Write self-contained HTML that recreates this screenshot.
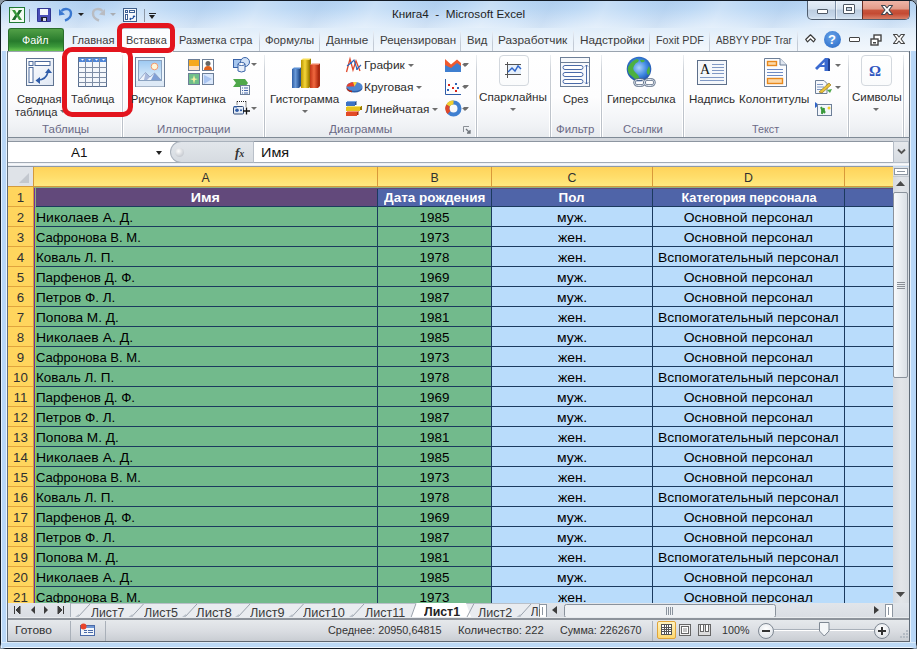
<!DOCTYPE html>
<html><head><meta charset="utf-8">
<style>
*{box-sizing:border-box;margin:0;padding:0}
html,body{width:917px;height:649px;overflow:hidden;background:#8a96a3}
body{position:relative;font-family:"Liberation Sans",sans-serif;}
.a{position:absolute}
svg{position:absolute;overflow:visible}
#win{position:absolute;left:0;top:0;width:917px;height:649px;border:1px solid #121a24;border-radius:7px 7px 6px 6px;
 background:linear-gradient(180deg,#dce8f6 0px,#d3e2f3 20px,#e2ecf8 30px,#edf3fa 50px,#c6daf0 60px,#c2d7ef 649px);}
.tx{position:absolute;white-space:nowrap;font-size:11.3px;color:#2a2a2a;line-height:1}
.tab{position:absolute;top:35px;font-size:11.3px;color:#3b3b3b;white-space:nowrap;line-height:1}
.tsep{position:absolute;top:31px;width:1px;height:20px;background:linear-gradient(#e9eff7,#c3cbd6 60%,#c3cbd6)}
#ribbon{position:absolute;left:7px;top:51px;width:903px;height:87px;border:1px solid #5f6b78;border-top-color:#9aa4af;border-bottom-color:#7f8a96;border-radius:2px 2px 0 0;
 background:linear-gradient(180deg,#ffffff 0px,#fdfdfe 45px,#f1f3f6 72px,#e7eaee 86px)}
.gsep{position:absolute;top:3px;width:1px;height:82px;background:linear-gradient(#eceff2,#c9ced5 20%,#b9bfc7 95%);box-shadow:-1px 0 0 #fff,1px 0 0 #fff}
.glbl{position:absolute;top:72px;font-size:11.3px;color:#6b6b86;white-space:nowrap;line-height:1}
.rl{position:absolute;font-size:11.3px;color:#2e2e2e;white-space:nowrap;line-height:1}
.dd{position:absolute;width:0;height:0;border-left:3px solid transparent;border-right:3px solid transparent;border-top:3px solid #6d6d6d}
#grid{position:absolute;left:8px;top:166px;width:885px;height:437px;background:#fff;overflow:hidden;border-top:1px solid #8f99a6}
.corner{position:absolute;left:0;top:0;width:26px;height:20px;background:#dfe3e8;border-right:1px solid #d39a3c;border-bottom:1px solid #d39a3c}
.ch{position:absolute;top:0;height:20px;background:linear-gradient(180deg,#ffd35a 0%,#ffdd6a 50%,#ffe980 100%);border-right:1px solid #d9993a;border-bottom:1px solid #d39a3c;
 font-size:12.3px;color:#303030;text-align:center;line-height:23px}
.rh{position:absolute;left:0;width:26px;height:20px;background:#ffd55d;border-bottom:1px solid #e0a43e;border-right:1px solid #d39a3c;
 font-size:13.3px;color:#303030;text-align:center;line-height:22px}
.c{position:absolute;height:20px;white-space:nowrap;overflow:hidden;font-size:13px;line-height:22px;color:#000;border-bottom:1px solid #1b3a5e;border-right:1px solid #1b3a5e}
.hA{background:#62497b;color:#fff;font-weight:bold;font-size:13px;text-align:center}
.hB{background:#4f64a8;color:#fff;font-weight:bold;font-size:13px;text-align:center}
.gA{background:#72ba8c;padding-left:2px}
.gB{background:#72ba8c;text-align:center;font-size:13.4px}
.bC{background:#b9dcfb;text-align:center}
.sh{position:absolute;top:606px;font-size:12.3px;color:#3a3a3a;white-space:nowrap;line-height:1}
.st{position:absolute;top:626px;font-size:11px;color:#333;white-space:nowrap;line-height:1}

.t{position:absolute;white-space:nowrap;line-height:1;transform-origin:0 0}

.c span{display:inline-block;transform:scaleX(1.07);transform-origin:50% 50%}
.gA span{transform-origin:0 50%}
.gB span{transform:scaleX(1.0)}
.hA span,.hB span{transform:scaleX(1.0)}

</style></head><body>

<div id="win"></div>
<!-- window corner background -->
<div class="a" style="left:1px;top:1px;width:915px;height:27px;border-radius:6px 6px 0 0;background:linear-gradient(180deg,#b6d4f3 0px,#bdd9f5 8px,#cfe3f8 18px,#e0edfa 28px);"></div>
<div class="a" style="left:1px;top:1px;width:915px;height:27px;border-radius:6px 6px 0 0;background:repeating-linear-gradient(115deg,rgba(255,255,255,0) 0px,rgba(255,255,255,0.22) 25px,rgba(255,255,255,0) 55px,rgba(110,150,200,0.10) 80px,rgba(255,255,255,0) 105px);"></div>
<div class="a" style="left:1px;top:28px;width:915px;height:23px;background:linear-gradient(180deg,#e0edfa 0px,#ebf3fb 12px,#f2f7fc 23px)"></div>
<!-- left/right frame -->
<div class="a" style="left:1px;top:51px;width:1px;height:597px;background:#e6f2fe"></div>
<div class="a" style="left:2px;top:51px;width:4px;height:597px;background:#b9d7f7"></div>
<div class="a" style="left:6px;top:51px;width:1px;height:597px;background:#e8f4ff"></div>
<div class="a" style="left:7px;top:51px;width:1px;height:591px;background:#5f6b78"></div>
<div class="a" style="left:909px;top:51px;width:1px;height:591px;background:#5f6b78"></div>
<div class="a" style="left:910px;top:51px;width:1px;height:597px;background:#e6f2fe"></div>
<div class="a" style="left:911px;top:51px;width:5px;height:597px;background:#b9d7f7"></div>
<div class="a" style="left:1px;top:642px;width:915px;height:6px;border-radius:0 0 5px 5px;background:linear-gradient(#dcebf9 0px,#dcebf9 1px,#bcd9f6 1px,#bcd9f6 5px,#f0f7ff 5px)"></div>


<!-- QAT -->
<svg style="left:9px;top:7px" width="16" height="16" viewBox="0 0 16 16">
 <rect x="0.5" y="0.5" width="15" height="15" fill="#f4fbf2" stroke="#217a35"/>
 <path d="M1 1 L5 1 L1 5Z" fill="#d8ecd5"/>
 <path d="M3 3 L6 3 L8 6.5 L10 3 L13 3 L9.8 8 L13 13 L10 13 L8 9.5 L6 13 L3 13 L6.2 8Z" fill="#3a9a3c"/>
 <path d="M3 13 L6.2 8 L8 9.5 L6 13Z" fill="#1e6b2e"/>
 <path d="M10 3 L13 3 L9.8 8 L8 6.5Z" fill="#1e6b2e"/>
</svg>
<div class="a" style="left:29px;top:9px;width:1px;height:13px;background:#8c98a6"></div>
<svg style="left:37px;top:8px" width="14" height="14" viewBox="0 0 14 14">
 <rect x="0" y="0" width="14" height="14" rx="1" fill="#4a4fb8"/>
 <rect x="0.5" y="0.5" width="13" height="13" rx="1" fill="none" stroke="#2f3590"/>
 <rect x="3" y="1" width="8" height="6" fill="#f4f6fa"/>
 <rect x="4" y="9" width="6" height="4" fill="#1e2030"/>
 <rect x="6" y="10" width="3" height="3" fill="#d8dce6"/>
</svg>
<svg style="left:59px;top:8px" width="14" height="13" viewBox="0 0 14 13">
 <path d="M2.5 3 C5 0 12 0 12 5.5 C12 9 9 11.5 6 12.5" fill="none" stroke="#3a78d0" stroke-width="2.4"/>
 <path d="M0 1 L0 7.5 L6 6.5Z" fill="#3a78d0"/>
</svg>
<div class="dd" style="left:78px;top:13px;border-width:3px 3px 0 3px;border-top-color:#222"></div>
<svg style="left:91px;top:8px" width="14" height="13" viewBox="0 0 14 13">
 <path d="M11.5 3 C9 0 2 0 2 5.5 C2 9 5 11.5 8 12.5" fill="none" stroke="#b9bcc2" stroke-width="2.4"/>
 <path d="M14 1 L14 7.5 L8 6.5Z" fill="#b9bcc2"/>
</svg>
<div class="dd" style="left:110px;top:13px;border-width:3px 3px 0 3px;border-top-color:#a9adb3"></div>
<svg style="left:123px;top:8px" width="14" height="14" viewBox="0 0 14 14">
 <rect x="0.5" y="0.5" width="13" height="13" fill="#f4f7fb" stroke="#3f5f8a"/>
 <rect x="2.5" y="2.5" width="2" height="2" fill="#fff" stroke="#3d5f95" stroke-width="1"/>
 <rect x="6.5" y="2.5" width="5" height="2" fill="#fff" stroke="#3d5f95" stroke-width="1"/>
 <rect x="2.5" y="6.5" width="2" height="5" fill="#fff" stroke="#3d5f95" stroke-width="1"/>
 <path d="M7 11 Q10.5 11 11 8" fill="none" stroke="#1f4fa0" stroke-width="1.2"/>
 <path d="M6 11 L8 9.5 L8 12.5Z M11 7 L9.5 9 L12.5 9Z" fill="#1f4fa0"/>
</svg>
<div class="a" style="left:144px;top:9px;width:1px;height:13px;background:#8c98a6"></div>
<div class="a" style="left:149px;top:13px;width:7px;height:1px;background:#222"></div>
<div class="dd" style="left:149px;top:15px;border-width:4px 3.5px 0 3.5px;border-top-color:#222"></div>

<!-- window buttons -->
<div class="a" style="left:807px;top:1px;width:103px;height:19px;border:1px solid #4f5d6e;border-top:none;border-radius:0 0 5px 5px;overflow:hidden;background:linear-gradient(180deg,#e6eef8 0%,#d5e1ee 45%,#bccde0 50%,#c8d8ea 85%,#dbe7f3 100%)">
  <div class="a" style="left:27px;top:0;width:1px;height:19px;background:#7d8fa6;box-shadow:1px 0 0 rgba(255,255,255,.6)"></div>
  <div class="a" style="left:54px;top:0;width:48px;height:18px;border-left:1px solid #6a2f26;background:linear-gradient(180deg,#efb6a8 0%,#e29a88 45%,#c9553d 50%,#c44a33 70%,#d97e66 100%)"></div>
</div>
<div class="a" style="left:817px;top:9px;width:11px;height:5px;background:#fff;border:1px solid #4f5966;border-radius:1px"></div>
<div class="a" style="left:843px;top:4px;width:12px;height:10px;background:#fff;border:1px solid #4f5966;border-radius:1px"></div>
<div class="a" style="left:846px;top:7px;width:6px;height:4px;background:#c5d3e3;border:1px solid #4f5966"></div>
<svg style="left:881px;top:5px" width="12" height="11" viewBox="0 0 12 11">
 <path d="M0.5 0.5 H4 L6 3 L8 0.5 H11.5 L8 5 L11.5 9.5 H8 L6 7 L4 9.5 H0.5 L4 5Z" fill="#fff" stroke="#3f4650" stroke-width="1.1" stroke-linejoin="round"/>
</svg>

<!-- tabs row -->
<div class="a" style="left:8px;top:28px;width:56px;height:23px;border-radius:3px 3px 0 0;background:linear-gradient(180deg,#52a047 0%,#2f8131 45%,#267a2c 55%,#3b983a 80%,#68c650 100%);border:1px solid #2a6e2c;border-bottom:none"></div>
<div class="a" style="left:119px;top:28px;width:55px;height:24px;background:linear-gradient(#fbfcfe,#fff);border:1px solid #b9c0c9;border-bottom:none;border-radius:3px 3px 0 0"></div>
<div class="tsep" style="left:259px"></div>
<div class="tsep" style="left:319px"></div>
<div class="tsep" style="left:373px"></div>
<div class="tsep" style="left:460px"></div>
<div class="tsep" style="left:492px"></div>
<div class="tsep" style="left:573px"></div>
<div class="tsep" style="left:649px"></div>
<div class="tsep" style="left:709px"></div>
<div class="tsep" style="left:797px"></div>
<!-- ribbon right icons -->
<svg style="left:805px;top:34px" width="11" height="9" viewBox="0 0 11 9">
 <path d="M0.7 5.5 L5.5 0.8 L10.3 5.5 L8.5 7.8 L5.5 4.8 L2.5 7.8Z" fill="#fff" stroke="#3a3a3a" stroke-width="1.2" stroke-linejoin="round"/>
</svg>
<div class="a" style="left:824px;top:31px;width:17px;height:17px;border-radius:50%;background:radial-gradient(circle at 45% 35%,#6aa3e8 0%,#3f7fd4 60%,#2c62b8 100%)"></div>
<div class="tx" style="left:828px;top:33px;font-size:13px;font-weight:bold;color:#fff">?</div>
<div class="a" style="left:849px;top:37px;width:11px;height:5px;background:#fff;border:1.5px solid #444;border-radius:1px"></div>
<svg style="left:870px;top:34px" width="12" height="12" viewBox="0 0 12 12">
 <rect x="4" y="1" width="7" height="6" fill="#fff" stroke="#444" stroke-width="1.4"/>
 <rect x="1" y="5" width="7" height="6" fill="#fff" stroke="#444" stroke-width="1.4"/>
 <rect x="3" y="8" width="3" height="1.5" fill="#444"/>
</svg>
<svg style="left:893px;top:34px" width="12" height="11" viewBox="0 0 12 11">
 <path d="M0.5 0.5 H4 L6 3 L8 0.5 H11.5 L8 5 L11.5 9.5 H8 L6 7 L4 9.5 H0.5 L4 5Z" fill="#fff" stroke="#444" stroke-width="1.1" stroke-linejoin="round"/>
</svg>

<!-- ribbon -->
<div id="ribbon">
  <div class="gsep" style="left:114px"></div>
  <div class="gsep" style="left:256px"></div>
  <div class="gsep" style="left:468px"></div>
  <div class="gsep" style="left:542px"></div>
  <div class="gsep" style="left:593px"></div>
  <div class="gsep" style="left:675px"></div>
  <div class="gsep" style="left:840px"></div>
  <div class="gsep" style="left:895px"></div>
            </div>
<div class="a" style="left:120px;top:51px;width:53px;height:1px;background:#fff"></div>

<div class="dd" style="left:302px;top:110px"></div>
<div class="dd" style="left:408px;top:64px"></div>
<div class="dd" style="left:416px;top:86px"></div>
<div class="dd" style="left:432px;top:108px"></div>
<div class="dd" style="left:462px;top:64px"></div>
<div class="dd" style="left:462px;top:86px"></div>
<div class="dd" style="left:462px;top:108px"></div>
<div class="dd" style="left:510px;top:108px"></div>
<div class="dd" style="left:835px;top:64px"></div>
<div class="dd" style="left:835px;top:86px"></div>
<svg style="left:463px;top:126px" width="8" height="8" viewBox="0 0 8 8"><path d="M0.5 6 V0.5 H6" fill="none" stroke="#8a8f96"/><path d="M3 3 L7 7 M7 4 V7 H4" fill="none" stroke="#6f747b" stroke-width="1.3"/></svg>
<div class="dd" style="left:873px;top:108px"></div>

<!-- formula bar -->
<div class="a" style="left:8px;top:138px;width:901px;height:28px;background:#d3d7dd"></div>
<div class="a" style="left:8px;top:141px;width:885px;height:22px;background:#fff;border-top:1px solid #8d96a1;border-bottom:1px solid #a3abb5"></div>
<div class="a" style="left:8px;top:163px;width:901px;height:3px;background:linear-gradient(#e9edf2,#f8f9fb 50%,#dfe4ea)"></div>
<div class="dd" style="left:156px;top:151px;border-width:4px 3.5px 0 3.5px;border-top-color:#222"></div>
<div class="a" style="left:170px;top:141px;width:84px;height:22px;background:linear-gradient(#e2e6eb,#d6dbe1);border:1px solid #a9b1bb;border-right:1px solid #b9c0c9;border-radius:11px 0 0 11px"></div>
<div class="a" style="left:175px;top:148px;width:9px;height:9px;border-radius:50%;background:radial-gradient(circle at 40% 35%,#fdfdfd,#c8ccd2 70%)"></div>
<div class="tx" style="left:235px;top:146px;font-family:'Liberation Serif',serif;font-style:italic;font-weight:bold;font-size:13px;color:#333">f<span style="font-size:10px">x</span></div>
<div class="a" style="left:893px;top:141px;width:16px;height:22px;background:linear-gradient(#e6e9ed,#d6dbe1);border:1px solid #b4bcc6"></div>
<svg style="left:897px;top:148px" width="9" height="7" viewBox="0 0 9 7"><path d="M1 1.5 L4.5 5 L8 1.5" fill="none" stroke="#555" stroke-width="1.8"/></svg>

<!-- Pivot table 26,58 -->
<svg style="left:25px;top:57px" width="30" height="30" viewBox="0 0 30 30">
 <rect x="1.5" y="1.5" width="27" height="27" fill="url(#gp)" stroke="#5f7391"/>
 <rect x="4" y="4.5" width="4" height="4" fill="#fff" stroke="#4d6a9c"/>
 <rect x="10" y="4.5" width="15" height="4" fill="#fff" stroke="#4d6a9c"/>
 <rect x="4" y="10.5" width="4" height="15" fill="#fff" stroke="#4d6a9c"/>
 <path d="M13 23 Q21 23 23 15" fill="none" stroke="#2f5ca8" stroke-width="1.6"/>
 <path d="M10.5 23.5 L15 20 L15 27Z" fill="#2f5ca8"/>
 <path d="M23.5 11.5 L20 16 L27 16Z" fill="#2f5ca8"/>
</svg>
<svg width="0" height="0" style="left:0;top:0"><defs>
 <linearGradient id="gp" x1="0" y1="0" x2="1" y2="1"><stop offset="0" stop-color="#ffffff"/><stop offset="1" stop-color="#dfe7f3"/></linearGradient>
 <linearGradient id="gsky" x1="0" y1="0" x2="0" y2="1"><stop offset="0" stop-color="#9dc9f2"/><stop offset="1" stop-color="#e4f1fc"/></linearGradient>
 <linearGradient id="gblue" x1="0" y1="0" x2="1" y2="0"><stop offset="0" stop-color="#2f5fa6"/><stop offset="0.5" stop-color="#6a9ad8"/><stop offset="1" stop-color="#2c5a9c"/></linearGradient>
 <linearGradient id="gyel" x1="0" y1="0" x2="1" y2="0"><stop offset="0" stop-color="#b99500"/><stop offset="0.5" stop-color="#f5d63a"/><stop offset="1" stop-color="#a98700"/></linearGradient>
 <linearGradient id="gred" x1="0" y1="0" x2="1" y2="0"><stop offset="0" stop-color="#c23516"/><stop offset="0.5" stop-color="#f0683f"/><stop offset="1" stop-color="#b52e12"/></linearGradient>
 <radialGradient id="gglobe" cx="0.5" cy="0.45" r="0.55"><stop offset="0" stop-color="#a9d2fa"/><stop offset="0.6" stop-color="#3d86e0"/><stop offset="1" stop-color="#1d4fa6"/></radialGradient>
</defs></svg>
<!-- Table icon 78,57 -->
<svg style="left:78px;top:57px" width="30" height="30" viewBox="0 0 30 30">
 <rect x="0.5" y="0.5" width="28" height="29" fill="#f4f7fb" stroke="#5a6f8f"/>
 <rect x="1" y="1" width="27" height="4" fill="#4f86d8"/>
 <path d="M3 2 L6 2 L4.5 3.8Z M10 2 L13 2 L11.5 3.8Z M17 2 L20 2 L18.5 3.8Z M24 2 L27 2 L25.5 3.8Z" fill="#fff"/>
 <path d="M0.5 10.5 H28.5 M0.5 15.5 H28.5 M0.5 20.5 H28.5 M0.5 25.5 H28.5 M7.5 1 V29.5 M14.5 1 V29.5 M21.5 1 V29.5" stroke="#7f8ea6" stroke-width="1"/>
</svg>
<!-- Picture 135,57 -->
<svg style="left:135px;top:57px" width="30" height="30" viewBox="0 0 30 30">
 <rect x="0.5" y="0.5" width="29" height="29" fill="#eef6fd" stroke="#6d7f98"/>
 <rect x="1" y="24" width="28" height="5.5" fill="#dde9f6"/>
 <rect x="3.5" y="3.5" width="23" height="20" fill="url(#gsky)" stroke="#8aa2c0"/>
 <circle cx="19.5" cy="9.5" r="3.3" fill="#fff6d8" stroke="#f29a72" stroke-width="1"/>
 <path d="M4 23 L10.5 15.5 L15 20 L19.5 16 L26 23Z" fill="#eef3fb"/>
 <path d="M10.5 15.5 L15 20 L12 23 L9 23Z" fill="#a9b9dc"/>
 <path d="M19.5 16 L26 23 L16 23Z" fill="#7f9fd6"/>
 <path d="M4 23 L10.5 15.5 L15 20 L19.5 16 L26 23" fill="none" stroke="#8797bd" stroke-width="0.8"/>
</svg>
<!-- Clip art 188,59 -->
<svg style="left:188px;top:59px" width="27" height="27" viewBox="0 0 27 27">
 <rect x="0.5" y="0.5" width="11" height="11" fill="#f6a81c" stroke="#6d7f98"/>
 <rect x="1" y="7" width="10" height="4" fill="#ffe0c0"/>
 <rect x="14.5" y="0.5" width="11" height="11" fill="#fff" stroke="#6d7f98"/>
 <circle cx="20" cy="4.5" r="2.5" fill="#666"/>
 <path d="M16 11 Q16 7 20 7 Q24 7 24 11Z" fill="#e0621e"/>
 <rect x="0.5" y="14.5" width="11" height="11" fill="#6fbf8a" stroke="#6d7f98"/>
 <path d="M6 16 L7 19.5 L10 20 L7 21 L6 25 L5 21 L2 20 L5 19.5Z" fill="#f7f3a0"/>
 <rect x="14.5" y="14.5" width="11" height="11" fill="#dbe8fb" stroke="#6d7f98"/>
 <path d="M16 16 L24 20 L16 25Z" fill="#a9c4f0"/>
</svg>
<!-- Shapes 233,57 -->
<svg style="left:233px;top:57px" width="17" height="16" viewBox="0 0 17 16">
 <rect x="0.5" y="2.5" width="8" height="8" fill="#a6c6ee" stroke="#3b64a8"/>
 <circle cx="12" cy="5" r="4.5" fill="#cfe0f6" stroke="#3b64a8"/>
 <path d="M5 7 V14 Q8.5 16 12 14 V7" fill="#e9f0fa" stroke="#3b64a8"/>
 <ellipse cx="8.5" cy="7" rx="3.5" ry="1.5" fill="#fff" stroke="#3b64a8"/>
</svg>
<div class="dd" style="left:251px;top:63px"></div>
<!-- SmartArt 233,79 -->
<svg style="left:233px;top:79px" width="17" height="16" viewBox="0 0 17 16">
 <path d="M0 0 H12 L15 4 L12 8 H0 L3 4Z" fill="#4fa84a"/>
 <rect x="7.5" y="6.5" width="9" height="9" fill="#f2f6fb" stroke="#6d7f98"/>
 <path d="M9 9 H10 M11 9 H15 M9 11.5 H10 M11 11.5 H15 M9 14 H10 M11 14 H15" stroke="#4466a8" stroke-width="1"/>
</svg>
<!-- Screenshot 233,101 -->
<svg style="left:233px;top:101px" width="17" height="14" viewBox="0 0 17 14">
 <path d="M4 0.5 H13 M13 0.5 V6" fill="none" stroke="#222" stroke-width="1" stroke-dasharray="1 1"/>
 <path d="M4 0.5 V4" fill="none" stroke="#222" stroke-width="1" stroke-dasharray="1 1"/>
 <rect x="0.5" y="5.5" width="10" height="7.5" rx="1" fill="#e3ebf5" stroke="#2f4a78"/>
 <rect x="1" y="5" width="3" height="1.5" fill="#2f5ca8"/>
 <circle cx="4" cy="9.3" r="1.8" fill="#2f5ca8"/>
 <rect x="7" y="8.5" width="2" height="1.6" fill="#2f5ca8"/>
 <path d="M13.5 6.5 V13.5 M10 10 H17" stroke="#111" stroke-width="1.3"/>
</svg>
<div class="dd" style="left:251px;top:107px"></div>
<!-- Histogram 291,58 -->
<svg style="left:291px;top:58px" width="30" height="30" viewBox="0 0 30 30">
 <path d="M1 11 L3 9.5 L10 9.5 L8 11Z" fill="#5b8fd4"/>
 <path d="M8 11 L10 9.5 V28 L8 30Z" fill="#28508a"/>
 <rect x="1" y="11" width="7" height="19" fill="url(#gblue)"/>
 <path d="M10 2 L12 0.5 L20 0.5 L18 2Z" fill="#f7dd56"/>
 <path d="M18 2 L20 0.5 V28 L18 30Z" fill="#9a7c00"/>
 <rect x="10" y="2" width="8" height="28" fill="url(#gyel)"/>
 <path d="M19 7 L21 5.5 L29 5.5 L27 7Z" fill="#f08060"/>
 <path d="M27 7 L29 5.5 V28 L27 30Z" fill="#a82a10"/>
 <rect x="19" y="7" width="8" height="23" fill="url(#gred)"/>
</svg>
<!-- Line chart 346,58 -->
<svg style="left:346px;top:58px" width="16" height="15" viewBox="0 0 16 15">
 <path d="M0.5 14 L4 1 L7 12 L10 3 L14 13" fill="none" stroke="#e0482a" stroke-width="1.3"/>
 <path d="M1 8 L5 5 L8 2 L11 11 L15 7" fill="none" stroke="#2f64b8" stroke-width="1.1"/>
 <circle cx="5" cy="5" r="1" fill="#2f64b8"/><circle cx="11" cy="11" r="1" fill="#2f64b8"/>
</svg>
<!-- Pie 346,81 -->
<svg style="left:346px;top:81px" width="17" height="12" viewBox="0 0 17 12">
 <ellipse cx="8.5" cy="7" rx="8" ry="4.5" fill="#2d5ea6"/>
 <ellipse cx="8.5" cy="5.5" rx="8" ry="4.5" fill="#4f86d0"/>
 <path d="M8.5 5.5 L0.5 5.5 A8 4.5 0 0 1 8 1 Z" fill="#e8402a"/>
 <path d="M8.5 5.5 L7 1 A8 4.5 0 0 1 11 1.2 Z" fill="#f6d33a"/>
 <path d="M0.5 5.5 A8 4.5 0 0 0 6 9.8 L6 11.3 A8 4.5 0 0 1 0.5 7Z" fill="#b82a14"/>
</svg>
<!-- Bar 346,101 -->
<svg style="left:346px;top:101px" width="17" height="16" viewBox="0 0 17 16">
 <rect x="0" y="1" width="9" height="4" fill="#3d72c4"/><rect x="9" y="0" width="1.5" height="4" fill="#28508a"/><rect x="1" y="0" width="9" height="1" fill="#7aa6e4"/>
 <rect x="0" y="6" width="14" height="4" fill="#e7c21d"/><rect x="14" y="5" width="2" height="4" fill="#9a7c00"/><rect x="1" y="5" width="14" height="1" fill="#f7e26a"/>
 <rect x="0" y="11" width="11" height="4" fill="#e24a26"/><rect x="11" y="10" width="1.5" height="4" fill="#a82a10"/><rect x="1" y="10" width="11" height="1" fill="#f59070"/>
</svg>
<!-- Area 445,59 -->
<svg style="left:445px;top:59px" width="16" height="13" viewBox="0 0 16 13">
 <path d="M0 0 L6 5.5 L12 0.5 L16 4 V13 H0Z" fill="#f05a2e"/>
 <path d="M0 6 L6 9 L12 4 L16 7 V13 H0Z" fill="#3f7fd0"/>
</svg>
<div class="dd" style="left:463px;top:63px"></div>
<!-- Scatter 445,79 -->
<svg style="left:445px;top:79px" width="16" height="16" viewBox="0 0 16 16">
 <path d="M0.5 0 V15.5 H16" fill="none" stroke="#2f5ca8" stroke-width="1"/>
 <rect x="3" y="5" width="2" height="2" fill="#d8261a"/><rect x="10" y="4" width="2" height="2" fill="#2f64b8"/>
 <rect x="7" y="8" width="2" height="2" fill="#d8261a"/><rect x="12" y="8" width="2" height="2" fill="#2f64b8"/>
 <rect x="2" y="10" width="2" height="2" fill="#2f64b8"/><rect x="10" y="11" width="2" height="2" fill="#d8261a"/>
</svg>
<div class="dd" style="left:463px;top:85px"></div>
<!-- Doughnut 445,100 -->
<svg style="left:445px;top:100px" width="17" height="17" viewBox="0 0 17 17">
 <circle cx="8.5" cy="8.5" r="6" fill="none" stroke="#3f7fd0" stroke-width="4"/>
 <path d="M8.5 2.5 A6 6 0 0 0 3 5.5" fill="none" stroke="#f2cf2e" stroke-width="4"/>
 <path d="M3 5.5 A6 6 0 0 0 4 12.5" fill="none" stroke="#e0482a" stroke-width="4"/>
</svg>
<div class="dd" style="left:463px;top:107px"></div>
<!-- Sparklines 499,55 -->
<div class="a" style="left:499px;top:55px;width:30px;height:31px;border:1px solid #d3d8de;border-radius:4px;background:linear-gradient(#fff,#fafbfc)"></div>
<svg style="left:505px;top:62px" width="18" height="16" viewBox="0 0 18 16">
 <path d="M2.5 0 V16 M0 2.5 H16 M0 12.5 H16" stroke="#555" stroke-width="1"/>
 <rect x="3" y="3" width="13" height="9" fill="#e6f0fb"/>
 <path d="M3 10 L7 6 L10 9 L13 4 L16 7" fill="none" stroke="#2f64c8" stroke-width="1.4"/>
</svg>
<!-- Slicer 560,57 -->
<svg style="left:560px;top:57px" width="30" height="30" viewBox="0 0 30 30">
 <rect x="0.5" y="0.5" width="29" height="29" fill="#f7f9fc" stroke="#6d7f98"/>
 <path d="M0.5 5.5 H29.5" stroke="#6d7f98"/>
 <rect x="3" y="8.5" width="20" height="4" rx="2" fill="#fff" stroke="#4a6aa8"/>
 <rect x="3" y="15.5" width="20" height="4" rx="2" fill="#fff" stroke="#4a6aa8"/>
 <rect x="3" y="22.5" width="20" height="4" rx="2" fill="#fff" stroke="#4a6aa8"/>
 <path d="M26.5 8 V27 M25 9.5 L26.5 8 L28 9.5 M25 25.5 L26.5 27 L28 25.5" fill="none" stroke="#4a6aa8"/>
</svg>
<!-- Globe 626,57 -->
<svg style="left:626px;top:57px" width="30" height="30" viewBox="0 0 30 30">
 <circle cx="13" cy="12" r="12.3" fill="url(#gglobe)"/>
 <path d="M2 10 Q5 4 11 2 Q14 3 12 5 Q9 6 8 9 Q6 12 9 15 Q13 18 14 22 Q12 24 9 22 Q6 19 3 17 Q1 13 2 10Z" fill="#4cb040"/>
 <path d="M23 9 Q25 13 23 18 Q20 17 21 13Z" fill="#4cb040"/>
 <path d="M14 3 Q18 2 19 4 Q17 6 15 5Z" fill="#4cb040"/>
 <rect x="8.5" y="22.5" width="10" height="6" rx="3" fill="none" stroke="#5b6c84" stroke-width="2.4"/>
 <rect x="18.5" y="22.5" width="10" height="6" rx="3" fill="none" stroke="#5b6c84" stroke-width="2.4"/>
 <rect x="8.5" y="22.5" width="10" height="6" rx="3" fill="none" stroke="#dfe6f0" stroke-width="1"/>
 <rect x="18.5" y="22.5" width="10" height="6" rx="3" fill="none" stroke="#dfe6f0" stroke-width="1"/>
</svg>
<!-- TextBox 697,60 -->
<svg style="left:697px;top:60px" width="30" height="25" viewBox="0 0 30 25">
 <rect x="0.5" y="0.5" width="29" height="24" fill="#f4f7fb" stroke="#5d6f8a"/>
 <text x="3" y="14" font-family="Liberation Serif" font-size="14" fill="#111">A</text>
 <path d="M15 4.5 H27 M15 7.5 H27 M15 10.5 H27 M15 13.5 H27 M3 17.5 H27 M3 20.5 H27" stroke="#7f98c4" stroke-width="1"/>
</svg>
<!-- Header/Footer 764,58 -->
<svg style="left:764px;top:58px" width="23" height="29" viewBox="0 0 23 29">
 <path d="M0.5 0.5 H16 L22.5 7 V28.5 H0.5Z" fill="#fbfcfe" stroke="#6d7f98"/>
 <path d="M16 0.5 V7 H22.5" fill="#dfe6f0" stroke="#6d7f98"/>
 <rect x="3.5" y="3.5" width="9" height="4" fill="#fcd9a8" stroke="#e8891c" stroke-width="1.4"/>
 <path d="M3 11.5 H19 M3 14.5 H19 M3 17.5 H19" stroke="#6f8cc4"/>
 <rect x="3.5" y="20.5" width="15" height="5" fill="#fcd9a8" stroke="#e8891c" stroke-width="1.4"/>
</svg>
<!-- WordArt 815,58 -->
<svg style="left:815px;top:58px" width="17" height="14" viewBox="0 0 17 14">
 <path d="M0 10 L10 0 L13 0 L13 13 L9.5 13 L9.5 9 L5 9 L2 12Z M9.5 4 L6.5 7 L9.5 7Z" fill="#3a6ad0"/>
 <path d="M13 0 L15 1 L15 13 L13 13Z" fill="#1e3f90"/>
</svg>
<!-- Signature 815,80 -->
<svg style="left:815px;top:80px" width="17" height="14" viewBox="0 0 17 14">
 <path d="M0.5 0.5 H9 L12 3.5 V13.5 H0.5Z" fill="#f5f7fb" stroke="#6d7f98"/>
 <path d="M2 4.5 H8 M2 7 H9 M2 9.5 H8" stroke="#7f98c4"/>
 <path d="M4 12 L14 3 L16 5 L7 13Z" fill="#e9c23a" stroke="#8a6a10" stroke-width="0.6"/>
 <path d="M12 10 L17 9 L15 13Z" fill="#4fa84a"/>
</svg>
<!-- Object 815,102 -->
<svg style="left:815px;top:102px" width="17" height="14" viewBox="0 0 17 14">
 <path d="M0 0 L4 3 L0 6Z" fill="#2f64c8"/>
 <rect x="2.5" y="2.5" width="14" height="11" fill="#f2f6fb" stroke="#6d7f98"/>
 <path d="M6 5 Q8 8 7 12 M9 6 Q8 9 10 11" stroke="#3a9a3c" stroke-width="2" fill="none"/>
 <circle cx="14" cy="6" r="1.5" fill="#f2cf2e"/>
</svg>
<!-- Symbols 861,55 -->
<div class="a" style="left:861px;top:55px;width:31px;height:31px;border:1px solid #d3d8de;border-radius:4px;background:linear-gradient(#fff,#fafbfc)"></div>
<div class="tx" style="left:869px;top:64px;font-family:'Liberation Serif',serif;font-weight:bold;font-size:15px;color:#2f56c0">Ω</div>

<div class="dd" style="left:60px;top:110px"></div>
<!-- red annotation boxes -->
<div class="a" style="left:117px;top:23px;width:58px;height:30px;border:5px solid #e3151e;border-radius:7px"></div>
<div class="a" style="left:62px;top:47px;width:71px;height:70px;border:5px solid #e3151e;border-radius:10px"></div>

<div id="grid">
<div class="corner"></div><svg style="left:11px;top:5px" width="11" height="12" viewBox="0 0 11 12"><path d="M0 11 L10 1 V11Z" fill="#c3c8cf"/></svg>
<div class="ch" style="left:26px;width:344px">A</div>
<div class="ch" style="left:370px;width:114px">B</div>
<div class="ch" style="left:484px;width:161px">C</div>
<div class="ch" style="left:645px;width:192px">D</div>
<div class="ch" style="left:837px;width:48px;border-right:none"></div>
<div class="rh" style="top:20px">1</div>
<div class="c hA" style="left:26px;top:20px;width:344px"><span style="transform:scaleX(1.1)">Имя</span></div>
<div class="c hB" style="left:370px;top:20px;width:114px"><span style="transform:scaleX(1.04)">Дата рождения</span></div>
<div class="c hB" style="left:484px;top:20px;width:161px"><span style="transform:scaleX(1.03)">Пол</span></div>
<div class="c hB" style="left:645px;top:20px;width:192px"><span style="transform:scaleX(0.98)">Категория персонала</span></div>
<div class="c hB" style="left:837px;top:20px;width:48px;border-right:none"><span></span></div>
<div class="rh" style="top:40px">2</div>
<div class="c gA" style="left:26px;top:40px;width:344px"><span style="transform:scaleX(1.075)">Николаев А. Д.</span></div>
<div class="c gB" style="left:370px;top:40px;width:114px"><span>1985</span></div>
<div class="c bC" style="left:484px;top:40px;width:161px"><span>муж.</span></div>
<div class="c bC" style="left:645px;top:40px;width:192px"><span>Основной персонал</span></div>
<div class="c bC" style="left:837px;top:40px;width:48px;border-right:none"><span></span></div>
<div class="rh" style="top:60px">3</div>
<div class="c gA" style="left:26px;top:60px;width:344px"><span style="transform:scaleX(1.005)">Сафронова В. М.</span></div>
<div class="c gB" style="left:370px;top:60px;width:114px"><span>1973</span></div>
<div class="c bC" style="left:484px;top:60px;width:161px"><span>жен.</span></div>
<div class="c bC" style="left:645px;top:60px;width:192px"><span>Основной персонал</span></div>
<div class="c bC" style="left:837px;top:60px;width:48px;border-right:none"><span></span></div>
<div class="rh" style="top:80px">4</div>
<div class="c gA" style="left:26px;top:80px;width:344px"><span style="transform:scaleX(1.035)">Коваль Л. П.</span></div>
<div class="c gB" style="left:370px;top:80px;width:114px"><span>1978</span></div>
<div class="c bC" style="left:484px;top:80px;width:161px"><span>жен.</span></div>
<div class="c bC" style="left:645px;top:80px;width:192px"><span>Вспомогательный персонал</span></div>
<div class="c bC" style="left:837px;top:80px;width:48px;border-right:none"><span></span></div>
<div class="rh" style="top:100px">5</div>
<div class="c gA" style="left:26px;top:100px;width:344px"><span style="transform:scaleX(1.03)">Парфенов Д. Ф.</span></div>
<div class="c gB" style="left:370px;top:100px;width:114px"><span>1969</span></div>
<div class="c bC" style="left:484px;top:100px;width:161px"><span>муж.</span></div>
<div class="c bC" style="left:645px;top:100px;width:192px"><span>Основной персонал</span></div>
<div class="c bC" style="left:837px;top:100px;width:48px;border-right:none"><span></span></div>
<div class="rh" style="top:120px">6</div>
<div class="c gA" style="left:26px;top:120px;width:344px"><span style="transform:scaleX(1.04)">Петров Ф. Л.</span></div>
<div class="c gB" style="left:370px;top:120px;width:114px"><span>1987</span></div>
<div class="c bC" style="left:484px;top:120px;width:161px"><span>муж.</span></div>
<div class="c bC" style="left:645px;top:120px;width:192px"><span>Основной персонал</span></div>
<div class="c bC" style="left:837px;top:120px;width:48px;border-right:none"><span></span></div>
<div class="rh" style="top:140px">7</div>
<div class="c gA" style="left:26px;top:140px;width:344px"><span style="transform:scaleX(1.05)">Попова М. Д.</span></div>
<div class="c gB" style="left:370px;top:140px;width:114px"><span>1981</span></div>
<div class="c bC" style="left:484px;top:140px;width:161px"><span>жен.</span></div>
<div class="c bC" style="left:645px;top:140px;width:192px"><span>Вспомогательный персонал</span></div>
<div class="c bC" style="left:837px;top:140px;width:48px;border-right:none"><span></span></div>
<div class="rh" style="top:160px">8</div>
<div class="c gA" style="left:26px;top:160px;width:344px"><span style="transform:scaleX(1.075)">Николаев А. Д.</span></div>
<div class="c gB" style="left:370px;top:160px;width:114px"><span>1985</span></div>
<div class="c bC" style="left:484px;top:160px;width:161px"><span>муж.</span></div>
<div class="c bC" style="left:645px;top:160px;width:192px"><span>Основной персонал</span></div>
<div class="c bC" style="left:837px;top:160px;width:48px;border-right:none"><span></span></div>
<div class="rh" style="top:180px">9</div>
<div class="c gA" style="left:26px;top:180px;width:344px"><span style="transform:scaleX(1.005)">Сафронова В. М.</span></div>
<div class="c gB" style="left:370px;top:180px;width:114px"><span>1973</span></div>
<div class="c bC" style="left:484px;top:180px;width:161px"><span>жен.</span></div>
<div class="c bC" style="left:645px;top:180px;width:192px"><span>Основной персонал</span></div>
<div class="c bC" style="left:837px;top:180px;width:48px;border-right:none"><span></span></div>
<div class="rh" style="top:200px">10</div>
<div class="c gA" style="left:26px;top:200px;width:344px"><span style="transform:scaleX(1.035)">Коваль Л. П.</span></div>
<div class="c gB" style="left:370px;top:200px;width:114px"><span>1978</span></div>
<div class="c bC" style="left:484px;top:200px;width:161px"><span>жен.</span></div>
<div class="c bC" style="left:645px;top:200px;width:192px"><span>Вспомогательный персонал</span></div>
<div class="c bC" style="left:837px;top:200px;width:48px;border-right:none"><span></span></div>
<div class="rh" style="top:220px">11</div>
<div class="c gA" style="left:26px;top:220px;width:344px"><span style="transform:scaleX(1.03)">Парфенов Д. Ф.</span></div>
<div class="c gB" style="left:370px;top:220px;width:114px"><span>1969</span></div>
<div class="c bC" style="left:484px;top:220px;width:161px"><span>муж.</span></div>
<div class="c bC" style="left:645px;top:220px;width:192px"><span>Основной персонал</span></div>
<div class="c bC" style="left:837px;top:220px;width:48px;border-right:none"><span></span></div>
<div class="rh" style="top:240px">12</div>
<div class="c gA" style="left:26px;top:240px;width:344px"><span style="transform:scaleX(1.04)">Петров Ф. Л.</span></div>
<div class="c gB" style="left:370px;top:240px;width:114px"><span>1987</span></div>
<div class="c bC" style="left:484px;top:240px;width:161px"><span>муж.</span></div>
<div class="c bC" style="left:645px;top:240px;width:192px"><span>Основной персонал</span></div>
<div class="c bC" style="left:837px;top:240px;width:48px;border-right:none"><span></span></div>
<div class="rh" style="top:260px">13</div>
<div class="c gA" style="left:26px;top:260px;width:344px"><span style="transform:scaleX(1.05)">Попова М. Д.</span></div>
<div class="c gB" style="left:370px;top:260px;width:114px"><span>1981</span></div>
<div class="c bC" style="left:484px;top:260px;width:161px"><span>жен.</span></div>
<div class="c bC" style="left:645px;top:260px;width:192px"><span>Вспомогательный персонал</span></div>
<div class="c bC" style="left:837px;top:260px;width:48px;border-right:none"><span></span></div>
<div class="rh" style="top:280px">14</div>
<div class="c gA" style="left:26px;top:280px;width:344px"><span style="transform:scaleX(1.075)">Николаев А. Д.</span></div>
<div class="c gB" style="left:370px;top:280px;width:114px"><span>1985</span></div>
<div class="c bC" style="left:484px;top:280px;width:161px"><span>муж.</span></div>
<div class="c bC" style="left:645px;top:280px;width:192px"><span>Основной персонал</span></div>
<div class="c bC" style="left:837px;top:280px;width:48px;border-right:none"><span></span></div>
<div class="rh" style="top:300px">15</div>
<div class="c gA" style="left:26px;top:300px;width:344px"><span style="transform:scaleX(1.005)">Сафронова В. М.</span></div>
<div class="c gB" style="left:370px;top:300px;width:114px"><span>1973</span></div>
<div class="c bC" style="left:484px;top:300px;width:161px"><span>жен.</span></div>
<div class="c bC" style="left:645px;top:300px;width:192px"><span>Основной персонал</span></div>
<div class="c bC" style="left:837px;top:300px;width:48px;border-right:none"><span></span></div>
<div class="rh" style="top:320px">16</div>
<div class="c gA" style="left:26px;top:320px;width:344px"><span style="transform:scaleX(1.035)">Коваль Л. П.</span></div>
<div class="c gB" style="left:370px;top:320px;width:114px"><span>1978</span></div>
<div class="c bC" style="left:484px;top:320px;width:161px"><span>жен.</span></div>
<div class="c bC" style="left:645px;top:320px;width:192px"><span>Вспомогательный персонал</span></div>
<div class="c bC" style="left:837px;top:320px;width:48px;border-right:none"><span></span></div>
<div class="rh" style="top:340px">17</div>
<div class="c gA" style="left:26px;top:340px;width:344px"><span style="transform:scaleX(1.03)">Парфенов Д. Ф.</span></div>
<div class="c gB" style="left:370px;top:340px;width:114px"><span>1969</span></div>
<div class="c bC" style="left:484px;top:340px;width:161px"><span>муж.</span></div>
<div class="c bC" style="left:645px;top:340px;width:192px"><span>Основной персонал</span></div>
<div class="c bC" style="left:837px;top:340px;width:48px;border-right:none"><span></span></div>
<div class="rh" style="top:360px">18</div>
<div class="c gA" style="left:26px;top:360px;width:344px"><span style="transform:scaleX(1.04)">Петров Ф. Л.</span></div>
<div class="c gB" style="left:370px;top:360px;width:114px"><span>1987</span></div>
<div class="c bC" style="left:484px;top:360px;width:161px"><span>муж.</span></div>
<div class="c bC" style="left:645px;top:360px;width:192px"><span>Основной персонал</span></div>
<div class="c bC" style="left:837px;top:360px;width:48px;border-right:none"><span></span></div>
<div class="rh" style="top:380px">19</div>
<div class="c gA" style="left:26px;top:380px;width:344px"><span style="transform:scaleX(1.05)">Попова М. Д.</span></div>
<div class="c gB" style="left:370px;top:380px;width:114px"><span>1981</span></div>
<div class="c bC" style="left:484px;top:380px;width:161px"><span>жен.</span></div>
<div class="c bC" style="left:645px;top:380px;width:192px"><span>Вспомогательный персонал</span></div>
<div class="c bC" style="left:837px;top:380px;width:48px;border-right:none"><span></span></div>
<div class="rh" style="top:400px">20</div>
<div class="c gA" style="left:26px;top:400px;width:344px"><span style="transform:scaleX(1.075)">Николаев А. Д.</span></div>
<div class="c gB" style="left:370px;top:400px;width:114px"><span>1985</span></div>
<div class="c bC" style="left:484px;top:400px;width:161px"><span>муж.</span></div>
<div class="c bC" style="left:645px;top:400px;width:192px"><span>Основной персонал</span></div>
<div class="c bC" style="left:837px;top:400px;width:48px;border-right:none"><span></span></div>
<div class="rh" style="top:420px">21</div>
<div class="c gA" style="left:26px;top:420px;width:344px"><span style="transform:scaleX(1.005)">Сафронова В. М.</span></div>
<div class="c gB" style="left:370px;top:420px;width:114px"><span>1973</span></div>
<div class="c bC" style="left:484px;top:420px;width:161px"><span>жен.</span></div>
<div class="c bC" style="left:645px;top:420px;width:192px"><span>Основной персонал</span></div>
<div class="c bC" style="left:837px;top:420px;width:48px;border-right:none"><span></span></div>
<div class="a" style="left:26px;top:21px;width:1px;height:420px;background:#7030a0"></div>
<div class="a" style="left:27px;top:41px;width:1px;height:400px;background:#92d050"></div>
<div class="a" style="left:26px;top:20px;width:860px;height:1px;background:#8fb080"></div>
<div class="a" style="left:27px;top:21px;width:860px;height:1px;background:#62497b"></div>
<div class="a" style="left:27px;top:21px;width:1px;height:19px;background:#8fb080"></div>
</div>
<!-- vertical scrollbar -->
<div class="a" style="left:893px;top:167px;width:16px;height:436px;background:linear-gradient(90deg,#d5d9df,#e2e5e9 50%,#dadee3)"></div>
<div class="a" style="left:894px;top:168px;width:14px;height:7px;background:#fff;border:1px solid #8d96a1"></div>
<div class="a" style="left:897px;top:171px;width:8px;height:1px;background:#8d96a1"></div>
<div class="a" style="left:893px;top:176px;width:16px;height:1px;background:#c3c9d0"></div>
<svg style="left:896px;top:181px" width="9" height="5" viewBox="0 0 9 5"><path d="M0 5 L4.5 0 L9 5Z" fill="#4a4a4a"/></svg>
<div class="a" style="left:893px;top:192px;width:15px;height:186px;border:1px solid #8a929c;border-radius:2px;background:linear-gradient(90deg,#f7f9fb,#e9edf1 50%,#dadfe5)"></div>
<svg style="left:896px;top:592px" width="9" height="5" viewBox="0 0 9 5"><path d="M0 0 L4.5 5 L9 0Z" fill="#4a4a4a"/></svg>

<div class="a" style="left:897px;top:282px;width:8px;height:7px;background:repeating-linear-gradient(180deg,#8a8f96 0px,#8a8f96 1px,transparent 1px,transparent 2px)"></div>
<!-- sheet tabs bar -->
<div class="a" style="left:8px;top:603px;width:901px;height:15px;background:linear-gradient(#e1e5ea,#d9dde3)"></div>

<svg style="left:8px;top:603px" width="901" height="15" viewBox="8 603 901 15">
 <path d="M14.5 606 V614 M20 606 L16 610 L20 614Z" fill="#3c3c3c" stroke="#3c3c3c" stroke-width="1"/>
 <path d="M35 606 L31 610 L35 614Z" fill="#3c3c3c"/>
 <path d="M44 606 L48 610 L44 614Z" fill="#3c3c3c"/>
 <path d="M63.5 606 V614 M58 606 L62 610 L58 614Z" fill="#3c3c3c" stroke="#3c3c3c" stroke-width="1"/>
 <path d="M70.5 603 V618" stroke="#aab2bc"/>
 <path d="M71 603 H540 V618 H71Z" fill="#e9ecf0"/>
 <g fill="none" stroke="#9ba3ad" stroke-width="1">
  <path d="M77.5 617.5 L90 604"/><path d="M131 617.5 L143.5 604"/><path d="M184.5 617.5 L197 604"/>
  <path d="M237.5 617.5 L250 604"/><path d="M291 617.5 L303.5 604"/><path d="M351.5 617.5 L364 604"/>
  <path d="M518.9 617.5 L531 604"/>
 </g>
 <g fill="#b9c0c9">
  <path d="M75 617 L79 617 L79 614Z"/><path d="M128.5 617 L132.5 617 L132.5 614Z"/><path d="M182 617 L186 617 L186 614Z"/>
  <path d="M235 617 L239 617 L239 614Z"/><path d="M288.5 617 L292.5 617 L292.5 614Z"/><path d="M349 617 L353 617 L353 614Z"/>
  <path d="M516.5 617 L520.5 617 L520.5 614Z"/>
 </g>
 <path d="M71 603.5 H540" stroke="#b9c0c9"/>
 <path d="M411 618 L416 603 H466 L471.5 618Z" fill="#fff"/>
 <path d="M411 617.5 L416 603.5 M466.5 618 L474 603.5" stroke="#9ba3ad" fill="none"/>
 <rect x="539.5" y="604.5" width="7" height="13" fill="#fff" stroke="#8d96a1"/>
 <path d="M542.5 607 V615" stroke="#8d96a1"/>
 <path d="M557 606 L552 610 L557 614Z" fill="#3c3c3c"/>
 <rect x="564.5" y="604.5" width="211" height="13" rx="2" fill="#eef1f4" stroke="#8a929c"/>
 <path d="M666.5 607 V615 M668.5 607 V615 M670.5 607 V615 M672.5 607 V615" stroke="#8a929c"/>
 <path d="M874 606 L879 610 L874 614Z" fill="#3c3c3c"/>
 <rect x="885.5" y="604.5" width="7" height="13" fill="#fff" stroke="#8d96a1"/>
 <path d="M888.5 607 V615" stroke="#8d96a1"/>
</svg>

<!-- status bar -->
<div class="a" style="left:8px;top:617px;width:901px;height:25px;background:linear-gradient(#fdfdfe,#e6e9ec 8%,#d9dce1 60%,#c9cdd3);border-top:1px solid #e8ebee;border-bottom:1px solid #5f6670"></div>
<div class="a" style="left:8px;top:618px;width:901px;height:2px;background:#8d939b"></div>
<div class="a" style="left:70px;top:621px;width:1px;height:20px;background:#a9b0b9"></div>
<div class="a" style="left:105px;top:621px;width:1px;height:20px;background:#a9b0b9"></div>
<div class="a" style="left:652px;top:621px;width:1px;height:20px;background:#a9b0b9"></div>
<svg style="left:80px;top:623px" width="15" height="13" viewBox="0 0 15 13">
 <rect x="0.5" y="2.5" width="14" height="10" fill="#f2f6fb" stroke="#4a6aa8"/>
 <rect x="1" y="3" width="13" height="2" fill="#6f96d4"/>
 <path d="M4 7.5 H7 M8 7.5 H13 M4 9.5 H7 M8 9.5 H13" stroke="#4a6aa8"/>
 <circle cx="3.5" cy="3.5" r="3" fill="#e8432a"/>
</svg>
<div class="a" style="left:657px;top:621px;width:19px;height:18px;border:1px solid #e0a53a;border-radius:2px;background:linear-gradient(#fff3c0,#fdd870)"></div>
<svg style="left:661px;top:624px" width="11" height="11" viewBox="0 0 11 11">
 <rect x="0.5" y="0.5" width="10" height="10" fill="#fff" stroke="#555"/>
 <path d="M0.5 3.5 H10.5 M0.5 5.5 H10.5 M0.5 7.5 H10.5 M3.5 0.5 V10.5 M5.5 0.5 V10.5 M7.5 0.5 V10.5" stroke="#555"/>
</svg>
<svg style="left:679px;top:624px" width="12" height="12" viewBox="0 0 12 12">
 <rect x="0.5" y="0.5" width="11" height="11" fill="#eee" stroke="#666"/>
 <rect x="2.5" y="2.5" width="7" height="7" fill="#fff" stroke="#666"/>
 <path d="M4 5 H8 M4 7 H8" stroke="#888"/>
</svg>
<svg style="left:698px;top:624px" width="13" height="12" viewBox="0 0 13 12">
 <rect x="0.5" y="0.5" width="12" height="11" fill="#ddd" stroke="#666"/>
 <rect x="2.5" y="0.5" width="3" height="7" fill="#fff" stroke="#666"/>
 <rect x="7.5" y="0.5" width="3" height="7" fill="#fff" stroke="#666"/>
</svg>
<div class="a" style="left:774px;top:629px;width:100px;height:2px;background:#a9b0b9;border-bottom:1px solid #fff"></div>
<div class="a" style="left:758px;top:623px;width:16px;height:16px;border-radius:50%;border:1px solid #7f8893;background:radial-gradient(circle at 50% 35%,#ffffff,#dfe3e8 80%)"></div>
<div class="a" style="left:762px;top:630px;width:8px;height:2px;background:#333"></div>
<div class="a" style="left:874px;top:623px;width:16px;height:16px;border-radius:50%;border:1px solid #7f8893;background:radial-gradient(circle at 50% 35%,#ffffff,#dfe3e8 80%)"></div>
<div class="a" style="left:878px;top:630px;width:8px;height:2px;background:#333"></div>
<div class="a" style="left:881px;top:627px;width:2px;height:8px;background:#333"></div>
<svg style="left:819px;top:622px" width="11" height="15" viewBox="0 0 11 15">
 <path d="M0.5 0.5 H10 V9 L5.25 14 L0.5 9Z" fill="#f4f6f8" stroke="#7f8893"/>
</svg>
<svg style="left:898px;top:630px" width="11" height="11" viewBox="0 0 11 11" fill="#b4bbc4">
 <rect x="8" y="0" width="2" height="2"/><rect x="5" y="3" width="2" height="2"/><rect x="8" y="3" width="2" height="2"/>
 <rect x="2" y="6" width="2" height="2"/><rect x="5" y="6" width="2" height="2"/><rect x="8" y="6" width="2" height="2"/>
</svg>

<div class="t" style="left:22.46px;top:35.39px;font-size:11.3px;color:#fff;transform:scaleX(0.9548)">Файл</div>
<div class="t" style="left:71.71px;top:35.23px;font-size:11.5px;color:#3c3c3c;transform:scaleX(0.9705)">Главная</div>
<div class="t" style="left:125.72px;top:35.23px;font-size:11.5px;color:#3c3c3c;transform:scaleX(0.9530)">Вставка</div>
<div class="t" style="left:178.62px;top:35.23px;font-size:11.5px;color:#3c3c3c;transform:scaleX(0.9575)">Разметка стра</div>
<div class="t" style="left:265.14px;top:35.23px;font-size:11.5px;color:#3c3c3c;transform:scaleX(0.9820)">Формулы</div>
<div class="t" style="left:325.90px;top:35.23px;font-size:11.5px;color:#3c3c3c;transform:scaleX(1.0163)">Данные</div>
<div class="t" style="left:379.58px;top:35.23px;font-size:11.5px;color:#3c3c3c;transform:scaleX(1.0021)">Рецензирован</div>
<div class="t" style="left:466.70px;top:35.23px;font-size:11.5px;color:#3c3c3c;transform:scaleX(0.9782)">Вид</div>
<div class="t" style="left:498.35px;top:35.23px;font-size:11.5px;color:#3c3c3c;transform:scaleX(1.0319)">Разработчик</div>
<div class="t" style="left:579.56px;top:35.23px;font-size:11.5px;color:#3c3c3c;transform:scaleX(1.0230)">Надстройки</div>
<div class="t" style="left:655.74px;top:35.23px;font-size:11.5px;color:#3c3c3c;transform:scaleX(0.9350)">Foxit PDF</div>
<div class="t" style="left:716.30px;top:35.23px;font-size:11.5px;color:#3c3c3c;transform:scaleX(0.8612)">ABBYY PDF Trar</div>
<div class="t" style="left:391.96px;top:8.14px;font-size:11.6px;color:#1e1e1e;transform:scaleX(1.0095)">Книга4 &nbsp;- &nbsp;Microsoft Excel</div>
<div class="t" style="left:17.14px;top:94.39px;font-size:11.3px;color:#2e2e2e;transform:scaleX(0.9830)">Сводная</div>
<div class="t" style="left:14.69px;top:107.39px;font-size:11.3px;color:#2e2e2e;transform:scaleX(0.9862)">таблица</div>
<div class="t" style="left:71.18px;top:94.39px;font-size:11.3px;color:#2e2e2e;transform:scaleX(0.9791)">Таблица</div>
<div class="t" style="left:130.63px;top:94.39px;font-size:11.3px;color:#2e2e2e;transform:scaleX(0.9676)">Рисунок</div>
<div class="t" style="left:176.36px;top:94.39px;font-size:11.3px;color:#2e2e2e;transform:scaleX(1.0371)">Картинка</div>
<div class="t" style="left:269.87px;top:94.39px;font-size:11.3px;color:#2e2e2e;transform:scaleX(1.0296)">Гистограмма</div>
<div class="t" style="left:364.04px;top:60.39px;font-size:11.3px;color:#2e2e2e;transform:scaleX(1.0570)">График</div>
<div class="t" style="left:364.04px;top:82.39px;font-size:11.3px;color:#2e2e2e;transform:scaleX(1.0569)">Круговая</div>
<div class="t" style="left:365.00px;top:104.39px;font-size:11.3px;color:#2e2e2e;transform:scaleX(1.0401)">Линейчатая</div>
<div class="t" style="left:479.41px;top:92.39px;font-size:11.3px;color:#2e2e2e;transform:scaleX(1.0370)">Спарклайны</div>
<div class="t" style="left:562.74px;top:94.39px;font-size:11.3px;color:#2e2e2e;transform:scaleX(0.9929)">Срез</div>
<div class="t" style="left:607.09px;top:94.39px;font-size:11.3px;color:#2e2e2e;transform:scaleX(1.0087)">Гиперссылка</div>
<div class="t" style="left:689.37px;top:94.39px;font-size:11.3px;color:#2e2e2e;transform:scaleX(1.0243)">Надпись</div>
<div class="t" style="left:739.28px;top:94.39px;font-size:11.3px;color:#2e2e2e;transform:scaleX(1.0210)">Колонтитулы</div>
<div class="t" style="left:852.13px;top:92.39px;font-size:11.3px;color:#2e2e2e;transform:scaleX(1.0163)">Символы</div>
<div class="t" style="left:41.57px;top:124.39px;font-size:11.3px;color:#6b6b86;transform:scaleX(1.0213)">Таблицы</div>
<div class="t" style="left:156.68px;top:124.39px;font-size:11.3px;color:#6b6b86;transform:scaleX(1.0156)">Иллюстрации</div>
<div class="t" style="left:329.00px;top:124.39px;font-size:11.3px;color:#6b6b86;transform:scaleX(1.0448)">Диаграммы</div>
<div class="t" style="left:555.93px;top:124.39px;font-size:11.3px;color:#6b6b86;transform:scaleX(1.0139)">Фильтр</div>
<div class="t" style="left:622.94px;top:124.39px;font-size:11.3px;color:#6b6b86;transform:scaleX(0.9989)">Ссылки</div>
<div class="t" style="left:751.68px;top:124.39px;font-size:11.3px;color:#6b6b86;transform:scaleX(0.9526)">Текст</div>
<div class="t" style="left:70.90px;top:147.12px;font-size:12.8px;color:#111;transform:scaleX(1.0488)">A1</div>
<div class="t" style="left:261.04px;top:147.12px;font-size:12.8px;color:#111;transform:scaleX(1.1289)">Имя</div>
<div class="t" style="left:15.44px;top:625.39px;font-size:11.3px;color:#333;transform:scaleX(1.0601)">Готово</div>
<div class="t" style="left:328.06px;top:625.39px;font-size:11.3px;color:#333;transform:scaleX(0.9618)">Среднее: 20950,64815</div>
<div class="t" style="left:457.90px;top:625.39px;font-size:11.3px;color:#333;transform:scaleX(1.0001)">Количество: 222</div>
<div class="t" style="left:559.96px;top:625.39px;font-size:11.3px;color:#333;transform:scaleX(0.9516)">Сумма: 2262670</div>
<div class="t" style="left:722.25px;top:625.39px;font-size:11.3px;color:#333;transform:scaleX(0.9503)">100%</div>
<div class="t" style="left:91.30px;top:606.54px;font-size:12.3px;color:#3a3a3a;transform:scaleX(0.9940)">Лист7</div>
<div class="t" style="left:144.00px;top:606.54px;font-size:12.3px;color:#3a3a3a;transform:scaleX(1.0144)">Лист5</div>
<div class="t" style="left:195.90px;top:606.54px;font-size:12.3px;color:#3a3a3a;transform:scaleX(1.0688)">Лист8</div>
<div class="t" style="left:249.60px;top:606.54px;font-size:12.3px;color:#3a3a3a;transform:scaleX(1.0303)">Лист9</div>
<div class="t" style="left:303.20px;top:606.54px;font-size:12.3px;color:#3a3a3a;transform:scaleX(1.0360)">Лист10</div>
<div class="t" style="left:365.20px;top:606.54px;font-size:12.3px;color:#3a3a3a;transform:scaleX(1.0199)">Лист11</div>
<div class="t" style="left:477.60px;top:606.54px;font-size:12.3px;color:#3a3a3a;transform:scaleX(1.0182)">Лист2</div>
<div class="t" style="left:424.10px;top:606.29px;font-size:12.6px;color:#222;transform:scaleX(0.9796);font-weight:bold">Лист1</div>
<div class="t" style="left:530.6px;top:605.5px;font-size:12.3px;color:#3a3a3a;width:9px;overflow:hidden">Лист</div>

</body></html>
